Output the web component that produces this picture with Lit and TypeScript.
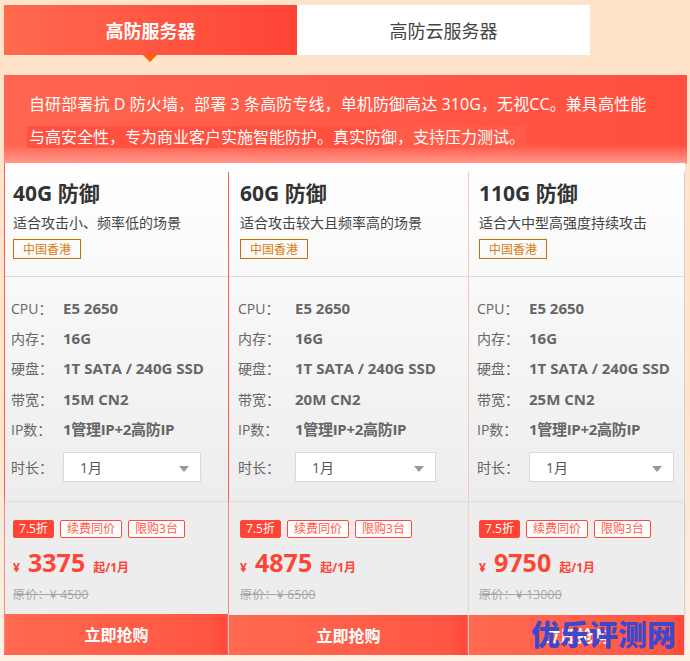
import { LitElement, html, css } from "lit";
import { customElement } from "lit/decorators.js";

interface Plan {
  name: string; desc: string; band: string; price: string; orig: string;
  cls: string;
}
const plans: Plan[] = [
  { name: "40G 防御", desc: "适合攻击小、频率低的场景", band: "15M CN2", price: "3375", orig: "¥ 4500", cls: "c1" },
  { name: "60G 防御", desc: "适合攻击较大且频率高的场景", band: "20M CN2", price: "4875", orig: "¥ 6500", cls: "c2" },
  { name: "110G 防御", desc: "适合大中型高强度持续攻击", band: "25M CN2", price: "9750", orig: "¥ 13000", cls: "c3" },
];

@customElement("app-root")
export class AppRoot extends LitElement {
  static styles = css`
    :host {
      display: block; position: relative; width: 690px; height: 661px; overflow: hidden;
      background: linear-gradient(180deg, #ffe3cb 0%, #ffe3cb 60%, #fdf1e6 100%);
      font-family: "Open Sans", "Noto Sans CJK SC", sans-serif;
      color: #333;
    }
    .page { padding: 5px 0 0 4px; }
    .tabs { display: flex; width: 586px; height: 50px; }
    .tab {
      flex: 1; display: flex; align-items: center; justify-content: center;
      font-size: 18px; background: #fff; color: #444; position: relative;
    }
    .tab.on {
      background: linear-gradient(90deg, #ff6a4e, #ff4436);
      color: #fff; font-weight: 700;
    }
    .tab.on::after {
      content: ""; position: absolute; left: 139px; top: 50px;
      border: 7px solid transparent; border-top: 7px solid #ff6000; border-bottom: 0;
    }
    .panel {
      margin-top: 20px; width: 683px; height: 89px; box-sizing: border-box;
      padding: 13px 25px 0; color: #fff; font-size: 16px; line-height: 33px;
      background:
        linear-gradient(180deg, rgba(255, 143, 132, 0) 78%, #ff9a90 100%),
        linear-gradient(90deg, #ff6550, #ff4f3f);
      letter-spacing: 0.1px;
    }
    .panel div { white-space: nowrap; }
    .panel .second { letter-spacing: 0; }
    .hl1 { background: #ff5040; box-shadow: -2px 0 0 #ff5040; }
    .hl2 { background: #ff5b49; }
    .cards { display: flex; position: relative; width: 681px; height: 492px; margin-top: -1px; }
    .cards::before {
      content: ""; position: absolute; left: 0; top: 0; width: 389px; height: 1px; background: #ff6a60;
    }
    .card {
      box-sizing: border-box; display: flex; flex-direction: column; position: relative;
      padding-top: 10px;
      background: linear-gradient(180deg, #fff 0%, #ededed 68%, #ededed 100%);
    }
    .card::after {
      content: ""; position: absolute; right: 0; top: 9px; bottom: 40px; width: 1px; background: #ff5a50;
    }
    .c1 { width: 225px; border-left: 1px solid #ff5a50; border-bottom: 1px solid #ff5a50; }
    .c2 { width: 240px; }
    .c2::after { background: #f8c8c0; }
    .c3 { width: 216px; }
    .c3::after { background: #d4d2d4; bottom: 0; }
    .head { height: 104px; box-sizing: border-box; border-bottom: 1px solid #dcdcdc; padding: 6px 0 0 8px; }
    .c2 .head { padding-left: 11px; }
    .c3 .head { padding-left: 10px; }
    .name { font-size: 21px; font-weight: 700; line-height: 28px; color: #333; }
    .desc { font-size: 14px; line-height: 20px; margin-top: 6px; color: #444; white-space: nowrap; }
    .tag {
      display: inline-block; box-sizing: border-box; width: 68px; height: 20px; margin-top: 6px;
      border: 1px solid #c87000; color: #d97c10; font-size: 12px; line-height: 20px; text-align: center;
    }
    .specs { height: 226px; box-sizing: border-box; padding: 16px 0 0 6px; }
    .c2 .specs { padding-left: 9px; }
    .c3 .specs { padding-left: 8px; }
    .row { display: flex; height: 30.2px; align-items: center; font-size: 14px; color: #666; }
    .lab { width: 52px; flex: none; }
    .c2 .lab { width: 57px; }
    .val { font-weight: 700; font-size: 15px; color: #666; white-space: nowrap; }
    .val.tight { letter-spacing: -0.3px; }
    .durrow { margin-top: 8px; }
    .sel {
      box-sizing: border-box; height: 30px; background: #fff; border: 1px solid #d9d9d9;
      display: flex; align-items: center; justify-content: space-between; padding: 0 11px 0 16px;
      font-size: 14px; color: #555;
    }
    .c1 .sel { width: 138px; }
    .c2 .sel { width: 141px; }
    .c3 .sel { width: 145px; }
    .arrow { width: 0; height: 0; border: 5px solid transparent; border-top: 6px solid #999; border-bottom: 0; margin-top: 4px; }
    .foot {
      flex: 1; box-sizing: border-box; background: #ededed; padding: 17px 0 0 8px;
      box-shadow: 0 -2px 3px #e0e0e2; display: flex; flex-direction: column;
    }
    .c2 .foot { padding-left: 11px; }
    .c3 .foot { padding-left: 10px; }
    .badges { display: flex; gap: 6px; height: 18px; }
    .b {
      box-sizing: border-box; height: 18px; border: 1px solid #ff4a3a; border-radius: 2px;
      color: #ff5a4a; font-size: 12px; line-height: 16px; text-align: center; background: #fff;
    }
    .b.d { width: 41px; background: #ff4436; color: #fff; }
    .b.r { width: 62px; }
    .b.l { width: 57px; }
    .price { display: flex; align-items: baseline; margin-top: 6px; height: 36px; color: #ff4436; font-weight: 700; }
    .yen { font-size: 12px; width: 15px; }
    .num { font-size: 25px; line-height: 36px; }
    .per { font-size: 12px; margin-left: 8px; }
    .orig {
      font-size: 12px; color: #a5a5a5; text-decoration: line-through; line-height: 20px;
      margin-top: 5px; white-space: nowrap; letter-spacing: 0.25px;
    }
    .buy {
      flex: none; height: 40px; margin-top: auto; display: flex; align-items: center; justify-content: center;
      background: linear-gradient(90deg, #ff6a50, #ff5644 92%, #ff4638);
      color: #fff; font-size: 16px; font-weight: 700; box-sizing: border-box;
    }
    .c1 .buy, .c2 .buy { border-right: 1px solid #ffb4aa; }
    .wrap { margin-left: -8px; }
    .c2 .wrap { margin-left: -11px; }
    .c3 .wrap { margin-left: -10px; }
    .mark {
      position: absolute; left: 531px; top: 616px; font-size: 29px; line-height: 38px; font-weight: 900;
      color: #3f48cc; letter-spacing: 0; white-space: nowrap;
    }
  `;

  private card(p: Plan) {
    return html`
      <div class="card ${p.cls}">
        <div class="head">
          <div class="name">${p.name}</div>
          <div class="desc">${p.desc}</div>
          <span class="tag">中国香港</span>
        </div>
        <div class="specs">
          <div class="row"><span class="lab">CPU：</span><span class="val">E5 2650</span></div>
          <div class="row"><span class="lab">内存：</span><span class="val">16G</span></div>
          <div class="row"><span class="lab">硬盘：</span><span class="val">1T SATA / 240G SSD</span></div>
          <div class="row"><span class="lab">带宽：</span><span class="val">${p.band}</span></div>
          <div class="row"><span class="lab">IP数：</span><span class="val tight">1管理IP+2高防IP</span></div>
          <div class="row durrow">
            <span class="lab">时长：</span>
            <div class="sel"><span>1月</span><i class="arrow"></i></div>
          </div>
        </div>
        <div class="foot">
          <div class="badges">
            <span class="b d">7.5折</span><span class="b r">续费同价</span><span class="b l">限购3台</span>
          </div>
          <div class="price"><span class="yen">¥</span><span class="num">${p.price}</span><span class="per">起/1月</span></div>
          <div class="orig">原价：${p.orig}</div>
          <div class="buy wrap">立即抢购</div>
        </div>
      </div>`;
  }

  render() {
    return html`
      <div class="page">
        <div class="tabs">
          <div class="tab on">高防服务器</div>
          <div class="tab">高防云服务器</div>
        </div>
        <div class="panel">
          <div>自研部署抗 D 防火墙，部署 3 条高防专线，单机防御高达 310G，无视CC。兼具高性能</div>
          <div class="second"><span class="hl1">与高安全性，专为商业客户实施智能防护。真实防</span><span class="hl2">御，支持压力测试。</span></div>
        </div>
        <div class="cards">${plans.map((p) => this.card(p))}</div>
      </div>
      <div class="mark">优乐评测网</div>
    `;
  }
}
